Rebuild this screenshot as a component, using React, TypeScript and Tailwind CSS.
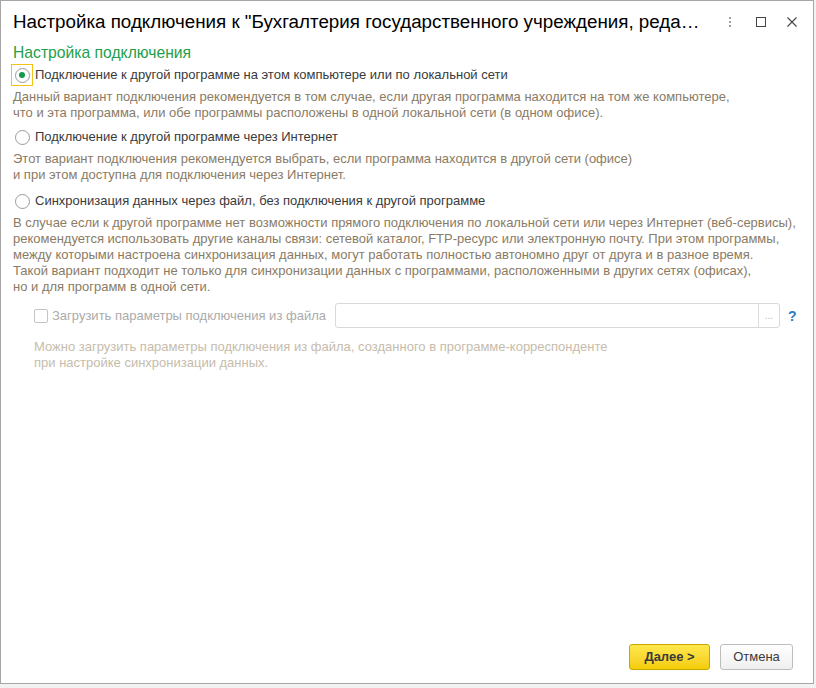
import React from "react";

const font = { fontFamily: '"Liberation Sans", Arial, sans-serif' };

function Radio({ checked, focused }: { checked?: boolean; focused?: boolean }) {
  return (
    <span
      className={`flex h-[22px] w-[22px] shrink-0 items-center justify-center ${
        focused ? "border border-[#f2c31a]" : "border border-transparent"
      }`}
    >
      <span className="flex h-[15px] w-[15px] items-center justify-center rounded-full border border-[#9a9a9a] bg-white">
        {checked && <span className="h-[6px] w-[6px] rounded-full bg-[#14994a]" />}
      </span>
    </span>
  );
}

export default function App() {
  return (
    <div className="h-[688px] w-[816px] bg-[#f2f2f2]" style={font}>
      <div className="flex h-[684px] w-[814px] flex-col border border-[#a6a6a6] bg-white">
        {/* title bar */}
        <div className="flex h-[42px] items-center pl-[12px] pr-[14px]">
          <div className="min-w-0 flex-1 whitespace-nowrap text-[18.8px] text-black">
            Настройка подключения к "Бухгалтерия государственного учреждения, реда…
          </div>
          <div className="ml-[8px] flex items-center gap-[17px] text-[#555]">
            <svg width="14" height="14" viewBox="0 0 14 14">
              <circle cx="7" cy="3" r="1.1" fill="#8a8a8a" />
              <circle cx="7" cy="7" r="1.1" fill="#8a8a8a" />
              <circle cx="7" cy="11" r="1.1" fill="#8a8a8a" />
            </svg>
            <svg width="14" height="14" viewBox="0 0 14 14">
              <rect x="2.5" y="2.5" width="9" height="9" fill="none" stroke="#444" strokeWidth="1" />
            </svg>
            <svg width="14" height="14" viewBox="0 0 14 14">
              <path d="M2.5 2.5 L11.5 11.5 M11.5 2.5 L2.5 11.5" stroke="#444" strokeWidth="1.1" />
            </svg>
          </div>
        </div>

        {/* body */}
        <div className="flex flex-1 flex-col px-[12px] text-[13px] leading-[16px]">
          <div className="text-[15.7px] leading-[20px] text-[#23a04a]">Настройка подключения</div>

          <div className="mt-[1px] flex items-center">
            <span className="-ml-[2px]">
              <Radio checked focused />
            </span>
            <span className="ml-[2px] text-[#3a3a3a]">
              Подключение к другой программе на этом компьютере или по локальной сети
            </span>
          </div>
          <div className="mt-[3px] text-[#8a7b64]">
            Данный вариант подключения рекомендуется в том случае, если другая программа находится на том же компьютере,
            <br />
            что и эта программа, или обе программы расположены в одной локальной сети (в одном офисе).
          </div>

          <div className="mt-[5px] flex items-center">
            <span className="-ml-[2px]">
              <Radio />
            </span>
            <span className="ml-[2px] text-[#3a3a3a]">Подключение к другой программе через Интернет</span>
          </div>
          <div className="mt-[3px] text-[#8a7b64]">
            Этот вариант подключения рекомендуется выбрать, если программа находится в другой сети (офисе)
            <br />
            и при этом доступна для подключения через Интернет.
          </div>

          <div className="mt-[7px] flex items-center">
            <span className="-ml-[2px]">
              <Radio />
            </span>
            <span className="ml-[2px] text-[#3a3a3a]">
              Синхронизация данных через файл, без подключения к другой программе
            </span>
          </div>
          <div className="mt-[3px] whitespace-nowrap text-[#8a7b64]">
            В случае если к другой программе нет возможности прямого подключения по локальной сети или через Интернет (веб-сервисы),
            <br />
            рекомендуется использовать другие каналы связи: сетевой каталог, FTP-ресурс или электронную почту. При этом программы,
            <br />
            между которыми настроена синхронизация данных, могут работать полностью автономно друг от друга и в разное время.
            <br />
            Такой вариант подходит не только для синхронизации данных с программами, расположенными в других сетях (офисах),
            <br />
            но и для программ в одной сети.
          </div>

          <div className="mt-[8px] flex items-center pl-[21px]">
            <span className="h-[14px] w-[14px] rounded-[2px] border border-[#c4c4c4] bg-white" />
            <span className="ml-[4px] text-[#ababab]">Загрузить параметры подключения из файла</span>
            <div className="ml-[9px] flex h-[25px] w-[445px] rounded-[3px] border border-[#d9d9d9] bg-white">
              <div className="flex-1" />
              <div className="flex w-[21px] items-center justify-center border-l border-[#dcdcdc] text-[10px] text-[#b5b5b5]">
                ...
              </div>
            </div>
            <span className="ml-[8px] text-[14px] font-bold text-[#2a7bc8]">?</span>
          </div>
          <div className="mt-[11px] pl-[21px] text-[#c6bcab]">
            Можно загрузить параметры подключения из файла, созданного в программе-корреспонденте
            <br />
            при настройке синхронизации данных.
          </div>

          <div className="flex-1" />

          {/* footer buttons */}
          <div className="mb-[13px] flex justify-end gap-[10px] pr-[8px]">
            <button className="h-[26px] w-[81px] rounded-[3px] border border-[#c7a600] bg-gradient-to-b from-[#ffe84c] to-[#f4cc00] text-[13px] font-bold text-[#3a3a3a]">
              Далее &gt;
            </button>
            <button className="h-[26px] w-[73px] rounded-[3px] border border-[#bdbdbd] bg-gradient-to-b from-white to-[#efefef] text-[13px] text-[#3a3a3a]">
              Отмена
            </button>
          </div>
        </div>
      </div>
    </div>
  );
}
